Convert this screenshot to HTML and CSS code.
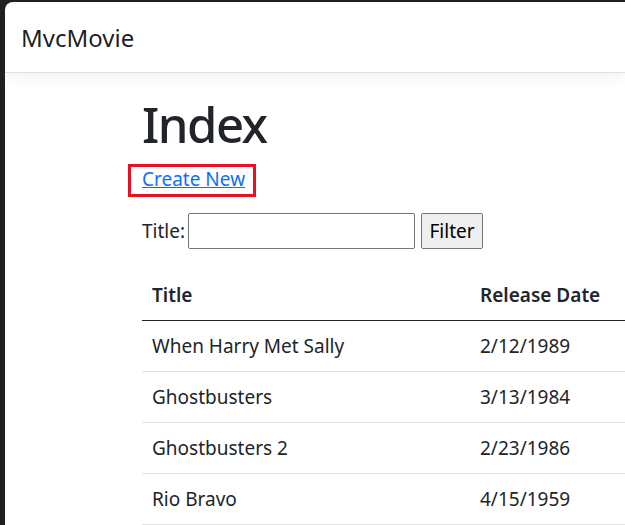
FILE: index.html
```html
<!DOCTYPE html>
<html lang="en">
<head>
<meta charset="utf-8">
<title>Index - MvcMovie</title>
<link rel="stylesheet" href="styles.css">
</head>
<body>
<div class="window">
  <header class="navbar">
    <a class="brand" href="#">MvcMovie</a>
  </header>
  <main class="main">
    <h1 class="title">Index</h1>
    <p class="create"><a class="create-link" href="#">Create New</a></p>
    <form class="filter">
      <label class="filter-label" for="q">Title:</label>
      <input class="filter-input" id="q" type="text">
      <button class="filter-btn" type="button">Filter</button>
    </form>
    <table class="table">
      <thead>
        <tr><th class="col-title">Title</th><th>Release Date</th></tr>
      </thead>
      <tbody>
        <tr><td>When Harry Met Sally</td><td>2/12/1989</td></tr>
        <tr><td>Ghostbusters</td><td>3/13/1984</td></tr>
        <tr><td>Ghostbusters 2</td><td>2/23/1986</td></tr>
        <tr><td>Rio Bravo</td><td>4/15/1959</td></tr>
      </tbody>
    </table>
  </main>
</div>
</body>
</html>
```

FILE: styles.css
```css
html, body {
  margin: 0;
  padding: 0;
  height: 100%;
  overflow: hidden;
}
body {
  background: #202020;
  font-family: "Segoe UI", "Noto Sans", sans-serif;
  color: #212529;
}
.window {
  margin: 2px 0 0 5px;
  height: calc(100% - 2px);
  background: #fff;
  border-top-left-radius: 8px;
  overflow: hidden;
}
.navbar {
  height: 70px;
  border-bottom: 1px solid #dee2e6;
  box-shadow: 0 5px 15px rgba(0, 0, 0, 0.05);
  display: flex;
  align-items: center;
  padding-left: 16px;
  position: relative;
}
.brand {
  font-size: 24px;
  color: rgba(0, 0, 0, 0.9);
  text-decoration: none;
}
.main {
  padding: 0 0 0 137px;
}
.title {
  margin: 22px 0 0;
  font-size: 49px;
  font-weight: 500;
  letter-spacing: -1.5px;
  line-height: 58px;
  height: 58px;
}
.create {
  margin: 11px 0 0;
  font-size: 19px;
  line-height: 30px;
  height: 30px;
}
.create-link {
  display: inline-block;
  position: relative;
  color: #0d6efd;
}
.create-link::after {
  content: "";
  position: absolute;
  top: 0;
  bottom: -3px;
  left: -14px;
  right: -11px;
  border: 3px solid #e81123;
}
.filter {
  margin-top: 19px;
  display: flex;
  align-items: center;
  font-size: 19px;
  height: 36px;
}
.filter-label {
  margin-right: 3px;
}
.filter-input {
  width: 227px;
  height: 36px;
  box-sizing: border-box;
  border: 1px solid #767676;
  border-radius: 2px;
  margin: 0 6px 0 0;
}
.filter-btn {
  height: 36px;
  width: 62px;
  box-sizing: border-box;
  border: 1px solid #767676;
  border-radius: 2px;
  background: #efefef;
  font-family: inherit;
  font-size: 19px;
  color: #000;
  padding: 0;
}
.table {
  margin-top: 21px;
  border-collapse: collapse;
  width: 600px;
  font-size: 19px;
}
.table th, .table td {
  text-align: left;
  padding: 10px;
  line-height: 30px;
  border-bottom: 1px solid #dee2e6;
}
.table th {
  font-weight: 600;
  border-bottom: 1px solid #212529;
}
.col-title {
  width: 308px;
}
```
